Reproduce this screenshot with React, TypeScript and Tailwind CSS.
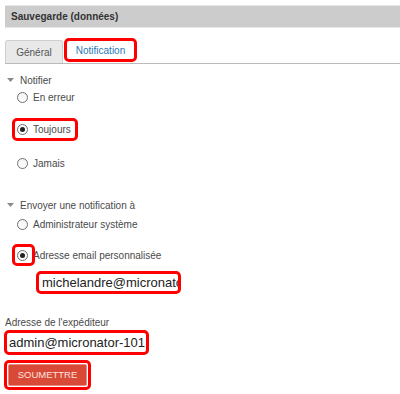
import React from "react";

function Radio({ checked }: { checked?: boolean }) {
  return (
    <span className="flex h-[11px] w-[11px] shrink-0 items-center justify-center rounded-full border border-[#6f6f6f] bg-gradient-to-b from-[#f4f4f4] to-white">
      {checked && <span className="h-[5px] w-[5px] rounded-full bg-[#222]" />}
    </span>
  );
}

function Caret() {
  return (
    <svg width="7" height="4" viewBox="0 0 7 4" className="ml-[2px] mr-[6px] shrink-0">
      <path d="M0 0 H7 L3.5 4 Z" fill="#8a8a8a" />
    </svg>
  );
}

export default function App() {
  return (
    <div
      className="h-[394px] w-[400px] bg-white pl-[5px] text-[10px] text-[#4a4a4a]"
      style={{ fontFamily: '"Liberation Sans", Arial, sans-serif' }}
    >
      <div className="pt-[5px]">
        <div className="flex h-[23px] items-center border-y border-[#e6e6e6] bg-[#cccccc] pl-[6px] font-bold text-[#333]">
          Sauvegarde (données)
        </div>
      </div>

      <div className="mt-[10px] flex items-end border-b border-[#bbbbbb]">
        <div className="flex h-[23px] w-[58px] items-center justify-center rounded-t-[3px] border border-b-0 border-[#cfcfcf] bg-[#e9e9e9] text-[#555]">
          Général
        </div>
        <div className="mb-px ml-px flex h-[24px] w-[73px] items-center justify-center rounded-[5px] border-[3px] border-[#ff0000] bg-white text-[#2b78b5]">
          Notification
        </div>
      </div>

      <div className="mt-[8px] flex h-[16px] items-center">
        <Caret />
        <span>Notifier</span>
      </div>
      <div className="mt-px flex h-[16px] items-center pl-[12px]">
        <Radio />
        <span className="ml-[5px]">En erreur</span>
      </div>
      <div className="ml-[7px] mt-[13px] flex h-[23px] w-[66px] items-center rounded-[5px] border-[3px] border-[#ff0000] pl-[2px]">
        <Radio checked />
        <span className="ml-[5px]">Toujours</span>
      </div>
      <div className="mt-[14px] flex h-[16px] items-center pl-[12px]">
        <Radio />
        <span className="ml-[5px]">Jamais</span>
      </div>

      <div className="mt-[26px] flex h-[16px] items-center">
        <Caret />
        <span>Envoyer une notification à</span>
      </div>
      <div className="mt-[3px] flex h-[16px] items-center pl-[12px]">
        <Radio />
        <span className="ml-[5px]">Administrateur système</span>
      </div>
      <div className="mt-[12px] flex h-[22px] items-center pl-[7px]">
        <div className="relative z-10 flex h-[22px] w-[23px] items-center rounded-[5px] border-[3px] border-[#ff0000] pl-[2px]">
          <Radio checked />
        </div>
        <span className="ml-[-2px]">Adresse email personnalisée</span>
      </div>

      <div className="ml-[31px] mt-[5px] flex h-[23px] w-[145px] items-center rounded-[5px] border-[3px] border-[#ff0000] bg-white pl-[3px]">
        <input
          readOnly
          value="michelandre@micronator.ca"
          className="w-full bg-transparent text-[13px] text-[#222] outline-none"
        />
      </div>

      <div className="mt-[21px] flex h-[14px] items-center">Adresse de l'expéditeur</div>
      <div className="ml-[-1px] mt-px flex h-[25px] w-[145px] items-center rounded-[5px] border-[3px] border-[#ff0000] bg-white pl-[2px]">
        <input
          readOnly
          value="admin@micronator-101.micronator.local"
          className="w-full bg-transparent text-[13px] text-[#222] outline-none"
        />
      </div>

      <div className="ml-[-1px] mt-[5px] w-[87px] rounded-[5px] border-[3px] border-[#ff0000] p-px">
        <button className="flex h-[22px] w-full items-center justify-center rounded-[2px] border border-[#e88a7f] bg-[#d84937] text-[9.5px] text-[#fbe3df]">
          SOUMETTRE
        </button>
      </div>
    </div>
  );
}
